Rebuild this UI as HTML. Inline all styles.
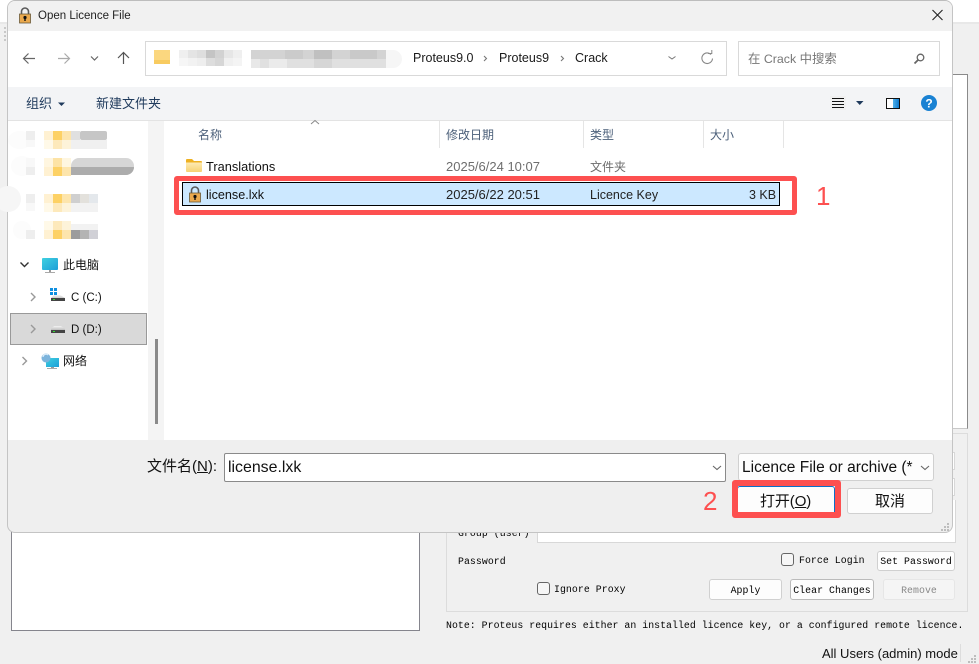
<!DOCTYPE html>
<html><head><meta charset="utf-8"><style>
html,body{margin:0;padding:0}
body{width:979px;height:664px;position:relative;overflow:hidden;background:#f0f0f0;font-family:"Liberation Sans","Noto Sans CJK SC",sans-serif;font-size:12px;color:#000}
div,span.a{position:absolute;box-sizing:border-box}
.t{white-space:nowrap;line-height:16px}
.m{font-family:"Liberation Mono","Noto Sans CJK SC",monospace;font-size:9.85px;letter-spacing:.06px;white-space:nowrap;line-height:14px;color:#000}
.btn{background:#fdfdfd;border:1px solid #d0d0d0;border-radius:3px;text-align:center}
svg{position:absolute;left:0;top:0}
</style></head><body>
<!-- background app -->
<div style="left:0;top:0;width:979px;height:22px;background:#fff"></div>
<div style="left:0;top:22px;width:979px;height:2px;background:#e8e8e8"></div>
<div style="left:952px;top:74px;width:16px;height:355px;background:#fff;border-top:1px solid #8a8a8a;border-right:1px solid #8a8a8a;border-bottom:1px solid #c8c8c8"></div>
<div style="left:11px;top:500px;width:409px;height:131px;background:#fff;border:1px solid #85858d"></div>
<div style="left:446px;top:433px;width:522px;height:179px;border:1px solid #dcdcdc"></div>
<div style="left:940px;top:452px;width:15px;height:18px;background:#fff;border:1px solid #d8d8d8"></div>
<div style="left:940px;top:478px;width:15px;height:18px;background:#fff;border:1px solid #d8d8d8"></div>
<div class="m" style="left:948px;top:504px">t</div>
<div style="left:537px;top:500px;width:419px;height:43px;background:#fff;border:1px solid #d8d8d8;border-top:0"></div>
<div class="m" style="left:458px;top:527px">Group (user)</div>
<div class="m" style="left:458px;top:555px">Password</div>
<div style="left:781px;top:553px;width:13px;height:13px;background:#f6f6f6;border:1px solid #666;border-radius:3px"></div>
<div class="m" style="left:799px;top:554px">Force Login</div>
<div class="btn m" style="left:877px;top:551px;width:78px;height:20px;line-height:19px">Set Password</div>
<div style="left:537px;top:582px;width:13px;height:13px;background:#f6f6f6;border:1px solid #666;border-radius:3px"></div>
<div class="m" style="left:554px;top:583px">Ignore Proxy</div>
<div class="btn m" style="left:709px;top:579px;width:73px;height:21px;line-height:22px">Apply</div>
<div class="btn m" style="left:790px;top:579px;width:84px;height:21px;line-height:22px;border-color:#bbb">Clear Changes</div>
<div class="btn m" style="left:883px;top:579px;width:72px;height:21px;line-height:22px;background:#f5f5f5;color:#888;border-color:#e6e6e6">Remove</div>
<div class="m" style="left:446px;top:619px;letter-spacing:.04px">Note: Proteus requires either an installed licence key, or a configured remote licence.</div>
<div class="t" style="left:822px;top:646px;font-size:13px;color:#111">All Users (admin) mode</div>
<div style="left:960px;top:644px;width:1px;height:18px;background:#ddd"></div>

<!-- dialog -->
<div style="left:7px;top:0;width:946px;height:533px;background:#efefef;border:1px solid #c4c4c4;border-top-color:#bdbdbd;border-radius:8px;overflow:hidden">
 <div style="left:0;top:0;width:944px;height:30px;background:#f1f1f1"></div>
 <div style="left:0;top:30px;width:944px;height:56px;background:#fff"></div>
 <div style="left:0;top:86px;width:944px;height:34px;background:#f3f4f6;border-bottom:1px solid #e3e3e3"></div>
 <div style="left:0;top:120px;width:944px;height:319px;background:#f4f4f4"></div>
 <div style="left:0;top:120px;width:140px;height:319px;background:#fff"></div>
 <div style="left:156px;top:120px;width:788px;height:319px;background:#fff"></div>
</div>
<div style="left:145px;top:41px;width:582px;height:35px;border:1px solid #d9d9d9;background:#fff"></div>
<div style="left:738px;top:41px;width:202px;height:35px;border:1px solid #d9d9d9;background:#fff"></div>

<!-- title -->
<div class="t" style="left:38px;top:8px;font-size:11.5px;color:#222">Open Licence File</div>
<!-- address -->
<div class="t" style="left:413px;top:50px;font-size:12.5px;color:#1a1a1a">Proteus9.0</div>
<div class="t" style="left:499px;top:50px;font-size:12.5px;color:#1a1a1a">Proteus9</div>
<div class="t" style="left:575px;top:50px;font-size:12.5px;color:#1a1a1a">Crack</div>
<div class="t" style="left:748px;top:51px;font-size:12.4px;color:#777">在 Crack 中搜索</div>
<!-- toolbar -->
<div class="t" style="left:26px;top:96px;color:#1f3a5c;font-size:13px">组织</div>
<div class="t" style="left:96px;top:96px;color:#1f3a5c;font-size:13px">新建文件夹</div>
<!-- columns -->
<div class="t" style="left:198px;top:127px;color:#4c607a">名称</div>
<div class="t" style="left:446px;top:127px;color:#4c607a">修改日期</div>
<div class="t" style="left:590px;top:127px;color:#4c607a">类型</div>
<div class="t" style="left:710px;top:127px;color:#4c607a">大小</div>
<div style="left:439px;top:121px;width:1px;height:27px;background:#e5e5e5"></div>
<div style="left:583px;top:121px;width:1px;height:27px;background:#e5e5e5"></div>
<div style="left:703px;top:121px;width:1px;height:27px;background:#e5e5e5"></div>
<div style="left:783px;top:121px;width:1px;height:27px;background:#e5e5e5"></div>
<!-- rows -->
<div class="t" style="left:206px;top:159px;font-size:12.8px;color:#111">Translations</div>
<div class="t" style="left:446px;top:159px;font-size:13px;color:#6d6d6d">2025/6/24 10:07</div>
<div class="t" style="left:590px;top:159px;color:#6d6d6d">文件夹</div>
<div style="left:182px;top:182px;width:598px;height:24px;background:#cce8ff;border:1px solid #000"></div>
<div class="t" style="left:206px;top:187px;font-size:12.6px;color:#111">license.lxk</div>
<div class="t" style="left:446px;top:187px;font-size:13px;color:#222">2025/6/22 20:51</div>
<div class="t" style="left:590px;top:187px;font-size:12.5px;color:#222">Licence Key</div>
<div class="t" style="left:749px;top:187px;font-size:12.5px;color:#222">3 KB</div>
<div style="left:174px;top:176px;width:623px;height:39px;border:5px solid #fd5050;border-radius:3px"></div>
<div class="t" style="left:816px;top:182px;font-size:26px;line-height:28px;color:#fd5050">1</div>
<!-- nav -->
<div style="left:10px;top:313px;width:137px;height:32px;background:#d9d9d9;border:1px solid #999"></div>
<div class="t" style="left:63px;top:257px;color:#111">此电脑</div>
<div class="t" style="left:71px;top:290px;color:#111;font-size:11.5px">C (C:)</div>
<div class="t" style="left:71px;top:322px;color:#111;font-size:11.5px">D (D:)</div>
<div class="t" style="left:63px;top:353px;color:#111">网络</div>
<div style="left:155px;top:339px;width:3px;height:85px;background:#8a8a8a"></div>
<!-- bottom -->
<div class="t" style="left:147px;top:459px;font-size:15px;color:#111">文件名(<u>N</u>):</div>
<div style="left:224px;top:453px;width:502px;height:29px;background:#fff;border:1px solid #8a8a8a;border-radius:2px"></div>
<div class="t" style="left:228px;top:460px;font-size:15.9px;color:#111">license.lxk</div>
<div style="left:738px;top:453px;width:196px;height:28px;background:#fdfdfd;border:1px solid #d0d0d0;border-radius:3px"></div>
<div class="t" style="left:742px;top:460px;width:171px;overflow:hidden;font-size:15.5px;color:#111">Licence File or archive (*.lxk)</div>
<div style="left:737px;top:486px;width:98px;height:30px;background:#fdfdfd;border:1.5px solid #0a6fc8;border-radius:3px"></div>
<div class="t" style="left:760px;top:494px;font-size:15px;color:#111;letter-spacing:-.1px">打开(<u>O</u>)</div>
<div class="btn" style="left:847px;top:488px;width:86px;height:26px"></div>
<div class="t" style="left:875px;top:494px;font-size:15px;color:#111">取消</div>
<div style="left:732px;top:480px;width:109px;height:38px;border:6px solid #fd5050;border-radius:3px"></div>
<div class="t" style="left:703px;top:487px;font-size:26px;line-height:28px;color:#fd5050">2</div>

<svg width="979" height="664" viewBox="0 0 979 664">
 <defs>
  <g id="lock">
   <path d="M2.500 7V4.500a3.500 3.500 0 0 1 7 0V7" fill="none" stroke="#5a5a5a" stroke-width="1.600"/>
   <rect x=".5" y="7" width="11" height="9" fill="#eaa94e" stroke="#6b5a3a" stroke-width=".8"/>
   <circle cx="6" cy="10.500" r="1.600" fill="#111"/><rect x="5.300" y="11" width="1.400" height="3" fill="#111"/>
  </g>
  <linearGradient id="fo" x1="0" y1="0" x2="0" y2="1"><stop offset="0" stop-color="#fdeab4"/><stop offset="1" stop-color="#f7d272"/></linearGradient>
  <linearGradient id="mo" x1="0" y1="0" x2="1" y2="1"><stop offset="0" stop-color="#3fd0e0"/><stop offset="1" stop-color="#1d9fd8"/></linearGradient>
  <linearGradient id="pa" x1="0" y1="0" x2="1" y2="0"><stop offset="0" stop-color="#4fb0ea"/><stop offset="1" stop-color="#0f7bd0"/></linearGradient>
  <linearGradient id="dr" x1="0" y1="0" x2="0" y2="1"><stop offset="0" stop-color="#f4f4f4"/><stop offset="1" stop-color="#bdbdbd"/></linearGradient>
 </defs>
 <use href="#lock" x="19" y="7"/>
 <use href="#lock" x="189" y="186"/>
 <!-- grip -->
 <g fill="#c8c8c8"><rect x="4" y="27" width="2" height="2"/><rect x="4" y="31" width="2" height="2"/><rect x="4" y="35" width="2" height="2"/><rect x="4" y="39" width="2" height="2"/></g>
 <!-- close -->
 <path d="M932.500 10l10 10M942.500 10l-10 10" stroke="#222" stroke-width="1.100" fill="none"/>
 <!-- nav arrows -->
 <path d="M35 58.500H23.500M28.500 53.500l-5 5 5 5" stroke="#666" stroke-width="1.200" fill="none"/>
 <path d="M58 58.500H69.500M64.500 53.500l5 5-5 5" stroke="#aaa" stroke-width="1.200" fill="none"/>
 <path d="M91 56.500l3.500 3.500 3.500-3.500" stroke="#666" stroke-width="1.200" fill="none"/>
 <path d="M123.500 64V52.500M118 58l5.500-5.500 5.500 5.500" stroke="#555" stroke-width="1.200" fill="none"/>
 <!-- blur in address -->
 <rect x="154" y="50" width="16" height="14" fill="#fbd77f"/><rect x="154" y="60" width="16" height="4" fill="#f8cb60"/>
 <g><rect x="179" y="50" width="9" height="8" fill="#efefef"/><rect x="188" y="50" width="9" height="8" fill="#e4e4e4"/><rect x="197" y="50" width="9" height="8" fill="#dedede"/><rect x="206" y="50" width="9" height="8" fill="#c4c4c4"/><rect x="215" y="50" width="9" height="8" fill="#d2d2d2"/><rect x="224" y="50" width="9" height="8" fill="#e6e6e6"/><rect x="233" y="50" width="9" height="8" fill="#efefef"/>
 <rect x="179" y="58" width="9" height="8" fill="#f6f6f6"/><rect x="188" y="58" width="9" height="8" fill="#f2f2f2"/><rect x="197" y="58" width="9" height="8" fill="#eee"/><rect x="206" y="58" width="9" height="8" fill="#ddd"/><rect x="215" y="58" width="9" height="8" fill="#d6d6d6"/><rect x="224" y="58" width="9" height="8" fill="#f0f0f0"/><rect x="233" y="58" width="9" height="8" fill="#f4f4f4"/></g>
 <rect x="251" y="50" width="151" height="18" rx="9" fill="#f6f6f6"/>
 <rect x="251" y="50" width="135" height="9" fill="#d3d3d3"/><rect x="251" y="59" width="135" height="9" fill="#e0e0e0"/>
 <rect x="285" y="50" width="18" height="9" fill="#cbcbcb"/><rect x="314" y="50" width="18" height="9" fill="#c0c0c0"/><rect x="350" y="50" width="27" height="9" fill="#c9c9c9"/>
 <rect x="251" y="59" width="9" height="9" fill="#e8e8e8"/><rect x="269" y="59" width="18" height="9" fill="#ebebeb"/><rect x="314" y="59" width="18" height="9" fill="#d6d6d6"/>
 <!-- crumbs -->
 <path d="M484 56l2.500 2.500-2.500 2.500M561 56l2.500 2.500-2.500 2.500" stroke="#777" stroke-width="1.100" fill="none"/>
 <path d="M668.500 56.500l3.500 2.500 3.500-2.500" stroke="#777" stroke-width="1" fill="none"/>
 <path d="M711 54.500a5.300 5.300 0 1 0 1.500 4" stroke="#888" stroke-width="1.100" fill="none"/><path d="M708 53.500h3.800v-3.500" stroke="#888" stroke-width="1" fill="none"/>
 <circle cx="920.500" cy="57.500" r="3.300" fill="none" stroke="#666" stroke-width="1.300"/><path d="M918 60l-3.500 3.500" stroke="#666" stroke-width="1.800"/>
 <!-- toolbar icons -->
 <path d="M58 102.500h7l-3.500 3.500z" fill="#1f3a5c"/>
 <rect x="830" y="96" width="16" height="14" fill="#f0f0f0"/>
 <rect x="832" y="98" width="12" height="1" fill="#111"/><rect x="832" y="101" width="12" height="1" fill="#111"/><rect x="832" y="104" width="12" height="1" fill="#111"/><rect x="832" y="107" width="12" height="1" fill="#111"/>
 <path d="M856 101h7.500l-3.750 4z" fill="#1f3a5c"/>
 <rect x="886.500" y="98.500" width="13" height="10" fill="#fff" stroke="#111"/><rect x="893" y="99" width="6" height="9" fill="url(#pa)"/>
 <circle cx="929" cy="103" r="8" fill="#1a82d3"/><text x="929" y="107.500" font-family="Liberation Sans" font-size="12" font-weight="bold" fill="#fff" text-anchor="middle">?</text>
 <path d="M311 124l4-3.500 4 3.500" stroke="#888" stroke-width="1" fill="none"/>
 <!-- folder -->
 <path d="M186 160a1 1 0 0 1 1-1h5l2 2h7a1 1 0 0 1 1 1V163h-16z" fill="#eeb122"/>
 <path d="M186 162.500h16v8.500a1 1 0 0 1-1 1h-14a1 1 0 0 1-1-1z" fill="url(#fo)"/>
 <!-- nav blur -->
 <ellipse cx="20" cy="140" rx="12" ry="9" fill="#fcfcfc"/><ellipse cx="22" cy="166" rx="11" ry="10" fill="#fcfcfc"/><ellipse cx="8" cy="199" rx="13" ry="13" fill="#f6f6f6"/><ellipse cx="22" cy="230" rx="9" ry="9" fill="#fcfcfc"/>
 <g>
  <rect x="26" y="131" width="9" height="9" fill="#eee"/><rect x="26" y="140" width="9" height="7" fill="#f8f8f8"/>
  <rect x="44" y="131" width="9" height="9" fill="#fff1d2"/><rect x="53" y="131" width="9" height="9" fill="#fdd164"/><rect x="62" y="131" width="9" height="9" fill="#fde5ac"/><rect x="71" y="131" width="9" height="9" fill="#e0e0e0"/><rect x="80" y="131" width="27" height="9" rx="2" fill="#c6c6c6"/>
  <rect x="44" y="140" width="9" height="9" fill="#fff9e8"/><rect x="53" y="140" width="9" height="9" fill="#fde9bb"/><rect x="62" y="140" width="9" height="9" fill="#fdf3d9"/><rect x="71" y="140" width="36" height="9" fill="#f0f0f0"/>
  <rect x="26" y="158" width="9" height="9" fill="#f8f8f8"/><rect x="26" y="167" width="9" height="8" fill="#eee"/>
  <rect x="44" y="158" width="9" height="9" fill="#fff6e0"/><rect x="53" y="158" width="9" height="9" fill="#fde3a5"/><rect x="62" y="158" width="9" height="9" fill="#fef6e0"/>
  <rect x="71" y="158" width="63" height="17" rx="8" fill="#d6d6d6"/>
  <rect x="44" y="167" width="9" height="9" fill="#fff1d2"/><rect x="53" y="167" width="9" height="9" fill="#fdd164"/><rect x="62" y="167" width="9" height="9" fill="#fde5ac"/>
  <path d="M71 167h63a8 8 0 0 1-8 8H71z" fill="#acacac"/>
  <rect x="26" y="194" width="9" height="9" fill="#eee"/><rect x="26" y="203" width="9" height="8" fill="#f8f8f8"/>
  <rect x="44" y="194" width="9" height="9" fill="#fff1d2"/><rect x="53" y="194" width="9" height="9" fill="#fdd164"/><rect x="62" y="194" width="9" height="9" fill="#fde5ac"/><rect x="71" y="194" width="9" height="9" fill="#cfcfcf"/><rect x="80" y="194" width="9" height="9" fill="#e3e1dc"/><rect x="89" y="194" width="9" height="9" fill="#e4e8ec"/>
  <rect x="44" y="203" width="9" height="9" fill="#fff9e8"/><rect x="53" y="203" width="9" height="9" fill="#fde9bb"/><rect x="62" y="203" width="9" height="9" fill="#fdf3d9"/><rect x="71" y="203" width="27" height="9" fill="#f2f2f2"/>
  <rect x="26" y="230" width="9" height="9" fill="#eee"/>
  <rect x="44" y="221" width="9" height="9" fill="#fff9e8"/><rect x="53" y="221" width="9" height="9" fill="#fde9bb"/><rect x="62" y="221" width="9" height="9" fill="#fdf3d9"/><rect x="71" y="224" width="27" height="6" fill="#f2f2f2"/>
  <rect x="44" y="230" width="9" height="9" fill="#fff1d2"/><rect x="53" y="230" width="9" height="9" fill="#fdd164"/><rect x="62" y="230" width="9" height="9" fill="#fde5ac"/><rect x="71" y="230" width="9" height="9" fill="#9c9c9c"/><rect x="80" y="230" width="9" height="9" fill="#b4b4b4"/><rect x="89" y="230" width="9" height="9" fill="#d0d0d6"/>
 </g>
 <!-- tree -->
 <path d="M20.500 262.500l4 4 4-4" stroke="#333" stroke-width="1.400" fill="none"/>
 <path d="M31 293l4 4-4 4M31 325l4 4-4 4M22.500 357l4 4-4 4" stroke="#999" stroke-width="1.400" fill="none"/>
 <rect x="42" y="258" width="16" height="12" rx="1" fill="url(#mo)"/><rect x="49" y="270" width="2" height="3" fill="#999"/><rect x="45" y="272" width="10" height="1" fill="#aaa"/>
 <rect x="50" y="288" width="3" height="3" fill="#0f8fe0"/><rect x="54" y="288" width="3" height="3" fill="#0f8fe0"/><rect x="50" y="292" width="3" height="3" fill="#0f8fe0"/><rect x="54" y="292" width="3" height="3" fill="#0f8fe0"/>
 <path d="M54 295h6l5 3v1H51v-1z" fill="url(#dr)"/><rect x="51" y="298" width="14" height="3" fill="#444"/><rect x="53" y="299" width="2" height="1" fill="#3d3"/>
 <path d="M54 326h7l4 3v1H51v-1z" fill="url(#dr)"/><rect x="51" y="330" width="14" height="3" fill="#444"/><rect x="53" y="331" width="2" height="1" fill="#3d3"/>
 <rect x="46" y="358" width="13" height="9" fill="url(#mo)"/><rect x="51" y="367" width="3" height="2" fill="#999"/><rect x="47" y="368" width="10" height="1" fill="#aaa"/>
 <circle cx="46" cy="358" r="4.500" fill="#7cb4dc"/><path d="M43 357a3 3 0 0 1 5-2" stroke="#dfeefa" stroke-width="1.200" fill="none"/>
 <!-- combos -->
 <path d="M713 466l4 3.500 4-3.500M921 466l4 3.500 4-3.500" stroke="#666" stroke-width="1.100" fill="none"/>
 <!-- grips -->
 <g fill="#bdbdbd"><rect x="947" y="523" width="2" height="2"/><rect x="944" y="526" width="2" height="2"/><rect x="947" y="526" width="2" height="2"/><rect x="941" y="529" width="2" height="2"/><rect x="944" y="529" width="2" height="2"/><rect x="947" y="529" width="2" height="2"/>
 <rect x="974" y="655" width="2" height="2"/><rect x="971" y="658" width="2" height="2"/><rect x="974" y="658" width="2" height="2"/><rect x="968" y="661" width="2" height="2"/><rect x="971" y="661" width="2" height="2"/><rect x="974" y="661" width="2" height="2"/></g>
</svg>
</body></html>
